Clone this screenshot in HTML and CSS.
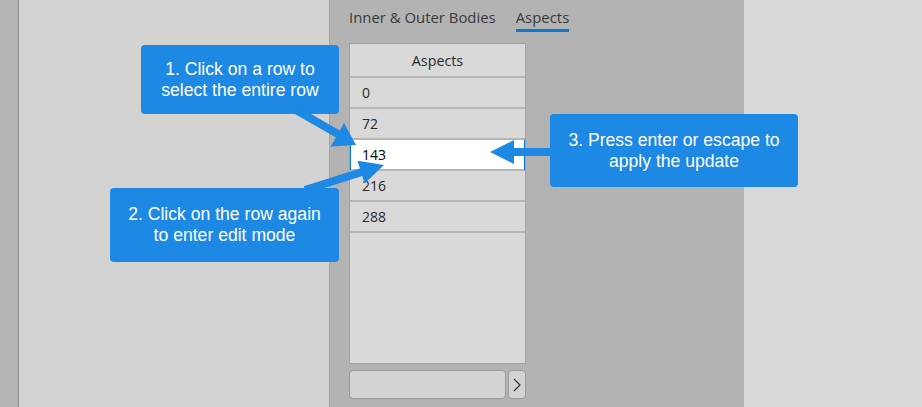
FILE: index.html
```html
<!DOCTYPE html>
<html>
<head>
<meta charset="utf-8">
<link rel="stylesheet" href="styles.css">
</head>
<body>
<div class="app">
  <div class="strip"></div>
  <div class="pane-left"></div>
  <div class="panel">
    <div class="tabs">
      <span class="tab">Inner &amp; Outer Bodies</span>
      <span class="tab active">Aspects</span>
    </div>
    <div class="grid">
      <div class="grid-head">Aspects</div>
      <div class="row">0</div>
      <div class="row">72</div>
      <div class="row selected">143</div>
      <div class="row">216</div>
      <div class="row">288</div>
    </div>
    <div class="pager">
      <div class="pager-input"></div>
      <div class="pager-btn">
        <svg width="10" height="16" viewBox="0 0 10 16"><polyline points="2,2 8,8 2,14" fill="none" stroke="#333" stroke-width="1.2"/></svg>
      </div>
    </div>
  </div>
  <div class="pane-right"></div>
</div>

<div class="callout c1">1. Click on a row to<br>select the entire row</div>
<div class="callout c2">2. Click on the row again<br>to enter edit mode</div>
<div class="callout c3">3. Press enter or escape to<br>apply the update</div>

<svg class="arrows" width="922" height="407" viewBox="0 0 922 407">
  <polygon fill="#1e88e5" points="294,113.5 336,137.5 330.5,146.5 356,145 344,123 339.7,130.5 298,106.5"/>
  <polygon fill="#1e88e5" points="303.8,186.2 359.9,168.4 357.5,160.8 384,165 364.7,183.6 362.3,176 306.2,193.8"/>
  <polygon fill="#1e88e5" points="552,148 514,148 514,140 490,152 514,164 514,156 552,156"/>
</svg>
</body>
</html>
```
FILE: styles.css
```css
html, body {
  margin: 0;
  padding: 0;
  width: 922px;
  height: 407px;
  overflow: hidden;
}
body {
  font-family: "Open Sans", "Noto Sans", sans-serif;
  position: relative;
}
.app {
  display: flex;
  height: 407px;
}
.strip {
  width: 18px;
  background: #b4b4b4;
  border-right: 1px solid #8e8e8e;
}
.pane-left {
  width: 310px;
  background: #d3d3d3;
  border-right: 1px solid #a4a4a4;
}
.panel {
  width: 395px;
  background: #b3b3b3;
  padding-left: 19px;
  display: flex;
  flex-direction: column;
}
.pane-right {
  flex: 1;
  background: #d9d9d9;
}
.tabs {
  display: flex;
  gap: 20px;
  height: 43px;
  padding-top: 7px;
  box-sizing: border-box;
  font-size: 14.9px;
  color: #3a3a3a;
}
.tab {
  height: 22px;
  line-height: 21px;
}
.tab.active {
  border-bottom: 3px solid #0a78d4;
}
.grid {
  width: 177px;
  height: 321px;
  box-sizing: border-box;
  border: 1px solid #a3a3a3;
  background: #d9d9d9;
  font-size: 14px;
  color: #2a2a2a;
}
.grid-head {
  height: 32px;
  border-bottom: 2px solid #b6b6b6;
  display: flex;
  align-items: center;
  justify-content: center;
  font-size: 14.3px;
}
.row {
  height: 29px;
  border-bottom: 2px solid #b6b6b6;
  padding-left: 12px;
  display: flex;
  align-items: center;
}
.row.selected {
  background: #fff;
  color: #000;
  border-left: 1px solid #0a78d4;
  border-right: 1px solid #0a78d4;
  padding-left: 11px;
}
.pager {
  display: flex;
  gap: 2px;
  margin-top: 6px;
  height: 29px;
}
.pager-input {
  width: 157px;
  box-sizing: border-box;
  border: 1px solid #9a9a9a;
  border-radius: 4px;
  background: #d3d3d3;
}
.pager-btn {
  width: 18px;
  box-sizing: border-box;
  border: 1px solid #9a9a9a;
  border-radius: 4px;
  background: #d3d3d3;
  display: flex;
  align-items: center;
  justify-content: center;
}
.callout {
  position: absolute;
  background: #1e88e5;
  color: #fff;
  border-radius: 4px;
  font-family: "Liberation Sans", Arial, sans-serif;
  font-size: 17.6px;
  line-height: 21px;
  text-align: center;
  display: flex;
  align-items: center;
  justify-content: center;
  box-sizing: border-box;
}
.c1 { left: 141px; top: 45px; width: 198px; height: 69px; }
.c2 { left: 110px; top: 188px; width: 229px; height: 74px; }
.c3 { left: 550px; top: 114px; width: 248px; height: 73px; }
.arrows {
  position: absolute;
  left: 0;
  top: 0;
  pointer-events: none;
}
```
